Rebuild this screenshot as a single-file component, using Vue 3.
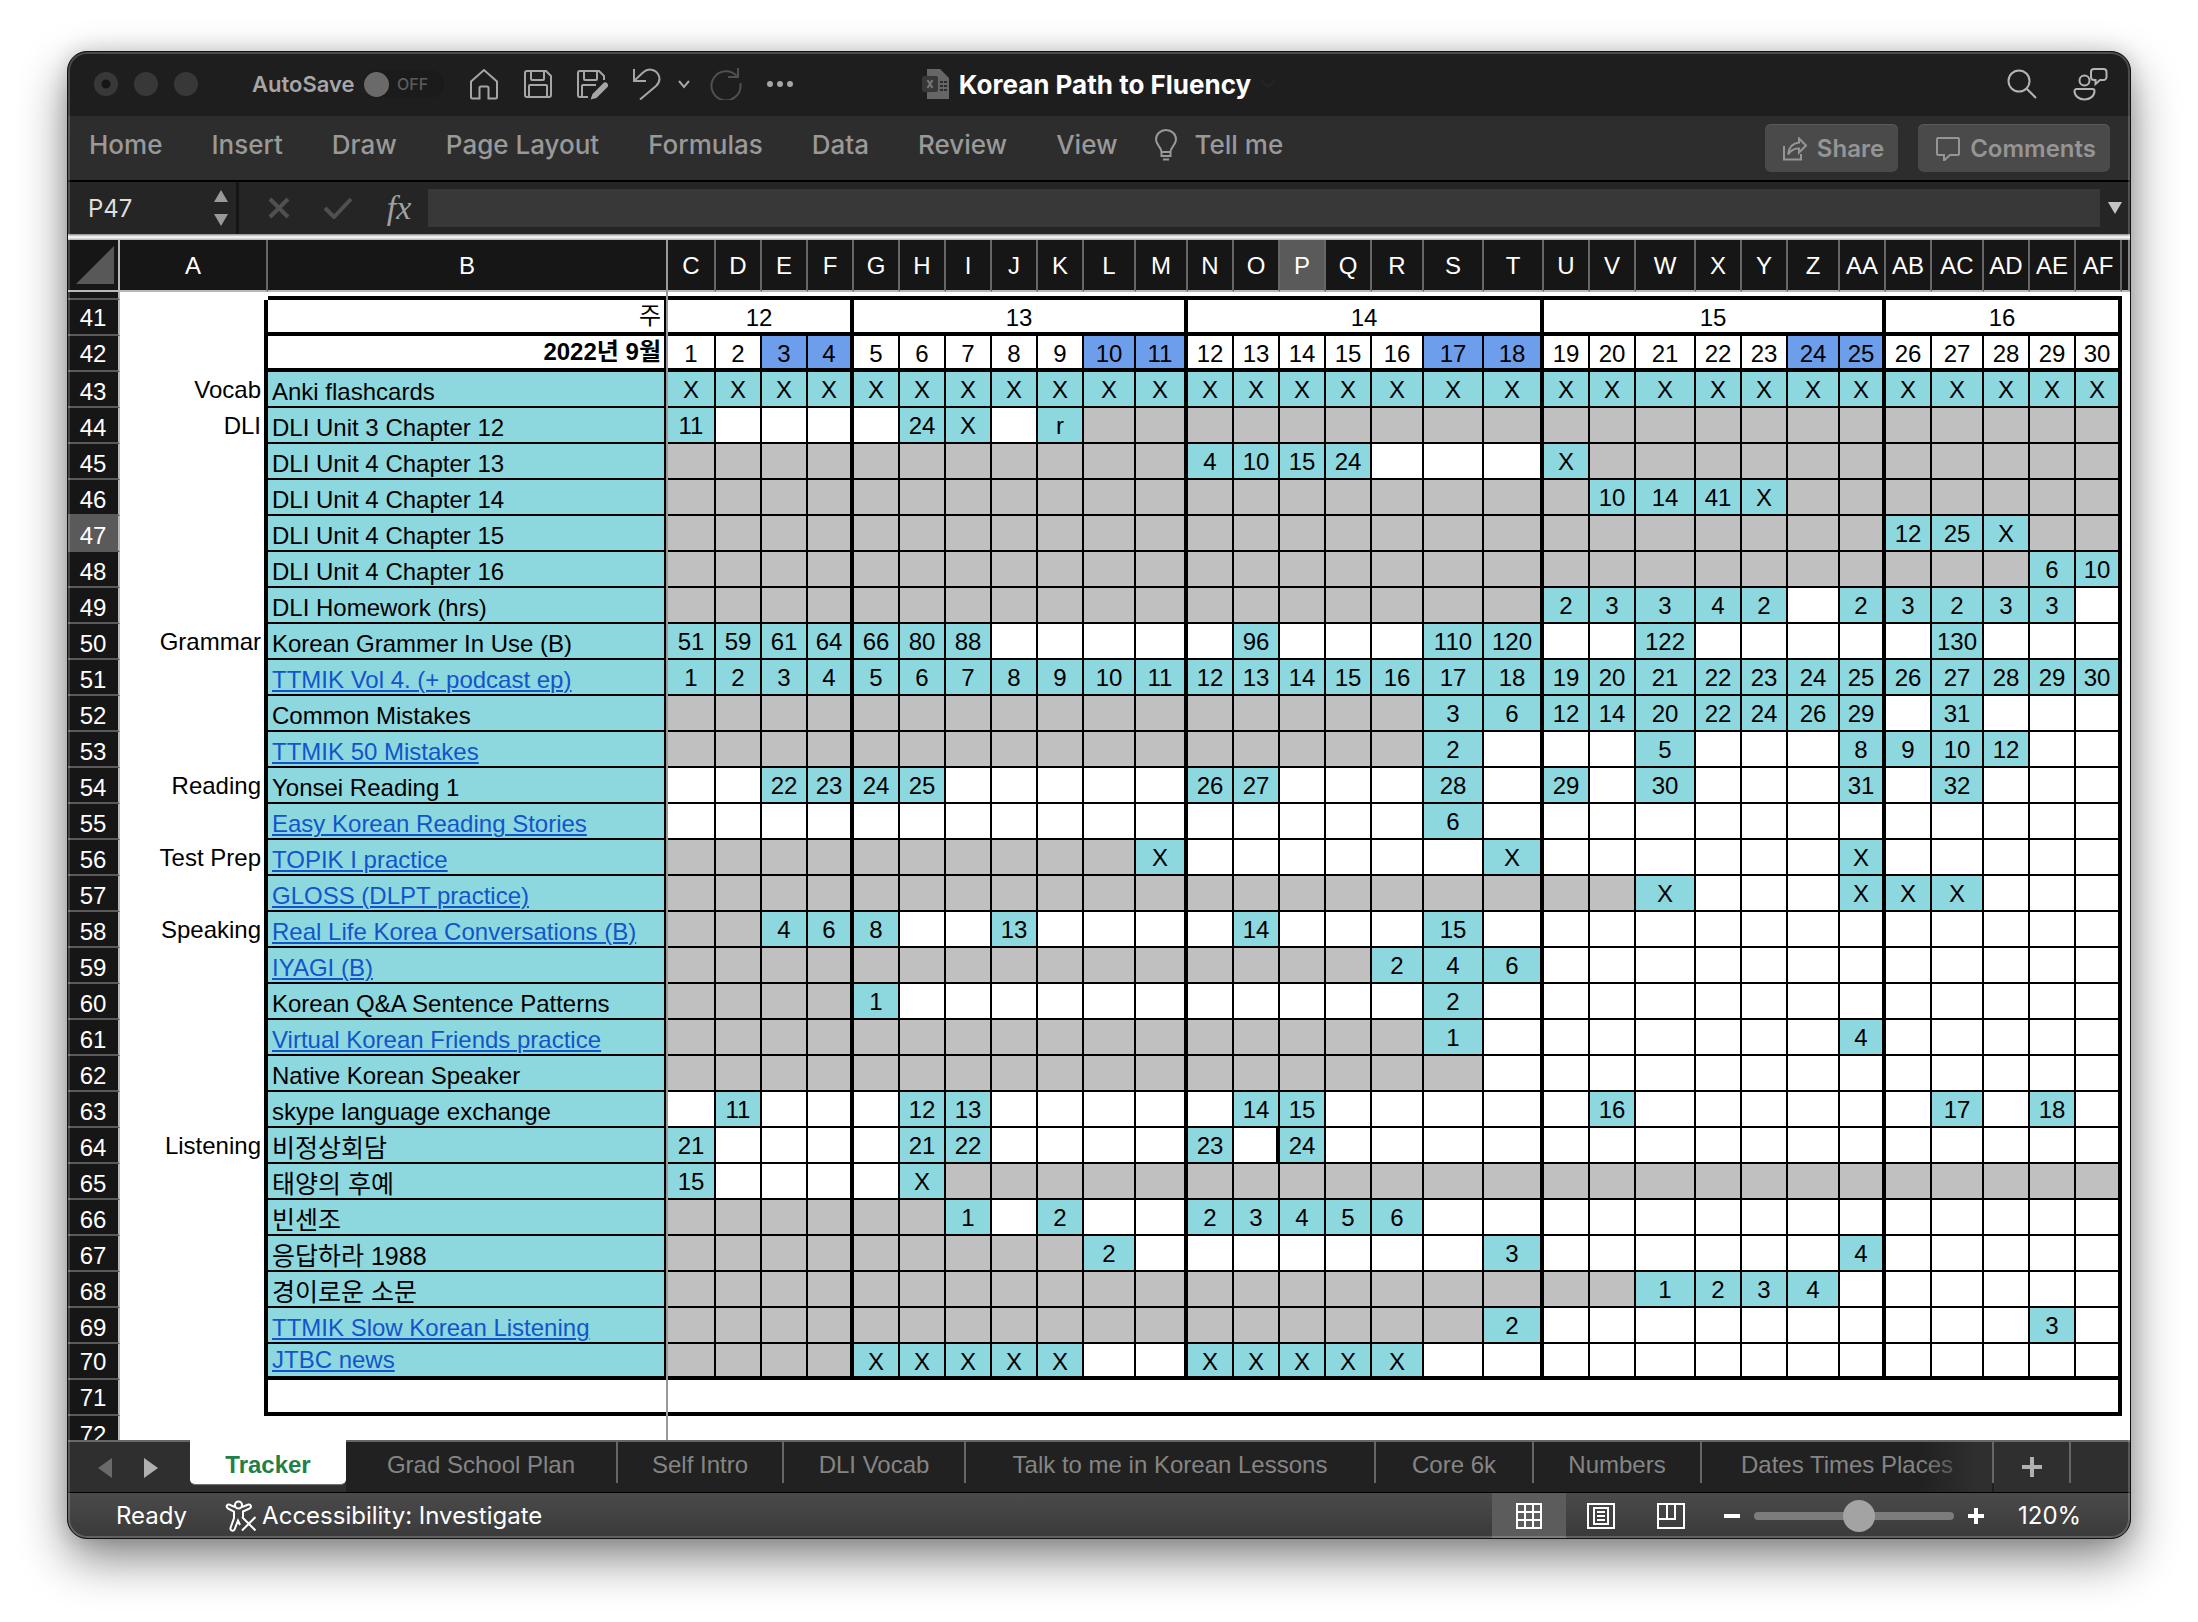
<script setup>
import { ref } from 'vue'

const weekEnds = ['F', 'M', 'T', 'AA', 'AF']
const weekends = [3, 4, 10, 11, 17, 18, 24, 25]

const columnWidths = {
  C: 48, D: 46, E: 46, F: 46, G: 46, H: 46, I: 46, J: 46, K: 46, L: 52, M: 52,
  N: 46, O: 46, P: 46, Q: 46, R: 52, S: 60, T: 60, U: 46, V: 46, W: 60, X: 46,
  Y: 46, Z: 52, AA: 46, AB: 46, AC: 52, AD: 46, AE: 46, AF: 46,
}
const days = Object.keys(columnWidths)

const weeks = [
  { label: 12, span: 4 },
  { label: 13, span: 7 },
  { label: 14, span: 7 },
  { label: 15, span: 7 },
  { label: 16, span: 5 },
]

// Each entry: "#n" is n closed cells, "_n" is n open cells, anything else is a logged value.
const tasks = [
  [43, 'Vocab', 'Anki flashcards', 'X X X X X X X X X X X X X X X X X X X X X X X X X X X X X X'],
  [44, 'DLI', 'DLI Unit 3 Chapter 12', '11 _4 24 X _1 r #21'],
  [45, '', 'DLI Unit 4 Chapter 13', '#11 4 10 15 24 _3 X #11'],
  [46, '', 'DLI Unit 4 Chapter 14', '#19 10 14 41 X #7'],
  [47, '', 'DLI Unit 4 Chapter 15', '#25 12 25 X #2'],
  [48, '', 'DLI Unit 4 Chapter 16', '#28 6 10'],
  [49, '', 'DLI Homework (hrs)', '#18 2 3 3 4 2 _1 2 3 2 3 3 _1'],
  [50, 'Grammar', 'Korean Grammer In Use (B)', '51 59 61 64 66 80 88 _5 96 _3 110 120 _2 122 _5 130 _3'],
  [51, '', 'TTMIK Vol 4. (+ podcast ep)', days.map((_, i) => i + 1).join(' '), true],
  [52, '', 'Common Mistakes', '#16 3 6 12 14 20 22 24 26 29 _1 31 _3'],
  [53, '', 'TTMIK 50 Mistakes', '#16 2 _3 5 _3 8 9 10 12 _2', true],
  [54, 'Reading', 'Yonsei Reading 1', '_2 22 23 24 25 _5 26 27 _3 28 _1 29 _1 30 _3 31 _1 32 _3'],
  [55, '', 'Easy Korean Reading Stories', '_16 6 _13', true],
  [56, 'Test Prep', 'TOPIK I practice', '#10 X _6 X _6 X _5', true],
  [57, '', 'GLOSS (DLPT practice)', '#20 X _3 X X X _3', true],
  [58, 'Speaking', 'Real Life Korea Conversations (B)', '#2 4 6 8 _2 13 _4 14 _3 15 _13', true],
  [59, '', 'IYAGI (B)', '#15 2 4 6 _12', true],
  [60, '', 'Korean Q&A Sentence Patterns', '#4 1 _11 2 _13'],
  [61, '', 'Virtual Korean Friends practice', '#16 1 _7 4 _5', true],
  [62, '', 'Native Korean Speaker', '#17 _13'],
  [63, '', 'skype language exchange', '_1 11 _3 12 13 _5 14 15 _5 16 _6 17 _1 18 _1'],
  [64, 'Listening', '비정상회담', '21 _4 21 22 _4 23 _1 24 _16'],
  [65, '', '태양의 후예', '15 _4 X #24'],
  [66, '', '빈센조', '#6 1 _1 2 _2 2 3 4 5 6 _14'],
  [67, '', '응답하라 1988', '#9 2 _7 3 _6 4 _5'],
  [68, '', '경이로운 소문', '#20 1 2 3 4 _6'],
  [69, '', 'TTMIK Slow Korean Listening', '#17 2 _10 3 _1', true],
  [70, '', 'JTBC news', '#4 X X X X X _2 X X X X X _14', true],
].map(([number, group, name, log, link]) => ({
  number,
  group,
  name,
  link,
  hangul: /[가-힣]/.test(name),
  cells: parseLog(number, log),
}))

function parseLog(row, log) {
  const cells = log.split(' ').flatMap((token) => {
    if (token[0] === '#') return Array.from({ length: +token.slice(1) }, () => ({ text: '', kind: 'closed' }))
    if (token[0] === '_') return Array.from({ length: +token.slice(1) }, () => ({ text: '', kind: 'open' }))
    return [{ text: token, kind: 'done' }]
  })
  return cells.map((cell, i) => ({
    ...cell,
    thick: weekEnds.includes(days[i]) || (row === 64 && days[i] === 'O'),
  }))
}

const ribbonTabs = ['Home', 'Insert', 'Draw', 'Page Layout', 'Formulas', 'Data', 'Review', 'View']

const sheets = [
  { name: 'Tracker', width: 156 },
  { name: 'Grad School Plan', width: 272 },
  { name: 'Self Intro', width: 166 },
  { name: 'DLI Vocab', width: 182 },
  { name: 'Talk to me in Korean Lessons', width: 410 },
  { name: 'Core 6k', width: 158 },
  { name: 'Numbers', width: 168 },
  { name: 'Dates Times Places', width: 292 },
]
const activeSheet = ref('Tracker')
const zoom = ref(53)
const cellRef = ref('P47')
const formula = ref('')
</script>

<template>
  <div class="desktop">
    <main class="window">
      <header class="titlebar">
        <div class="title-left">
          <div class="lights">
            <button class="light dot" aria-label="Close"></button>
            <button class="light" aria-label="Minimize"></button>
            <button class="light" aria-label="Zoom"></button>
          </div>
          <span class="autosave">AutoSave</span>
          <button class="toggle" role="switch" aria-checked="false" aria-label="AutoSave"><i></i>OFF</button>
          <div class="quick">
            <button aria-label="Home">
              <svg width="32" height="32" viewBox="0 0 32 32"><path d="M3 13.5 L16 2 L29 13.5 V29 a1.5 1.5 0 0 1-1.5 1.5 H20.5 V20 a1.5 1.5 0 0 0-1.5-1.5 H13 a1.5 1.5 0 0 0-1.5 1.5 V30.5 H4.500 A1.5 1.5 0 0 1 3 29 Z" /></svg>
            </button>
            <button aria-label="Save">
              <svg width="32" height="32" viewBox="0 0 32 32"><path d="M5 3 H24 L29 8 V27 a2 2 0 0 1-2 2 H5 a2 2 0 0 1-2-2 V5 a2 2 0 0 1 2-2 Z M9 3 V11 a1 1 0 0 0 1 1 H21 a1 1 0 0 0 1-1 V3 M7 29 V18 a1 1 0 0 1 1-1 H24 a1 1 0 0 1 1 1 V29" /></svg>
            </button>
            <button aria-label="Save as">
              <svg width="32" height="32" viewBox="0 0 32 32"><path d="M12 29 H4 a2 2 0 0 1-2-2 V5 a2 2 0 0 1 2-2 H23 L28 8 V12 M8 3 V11 a1 1 0 0 0 1 1 H20 a1 1 0 0 0 1-1 V3 M6 29 V18 a1 1 0 0 1 1-1 H20" /><path class="solid" d="M28 14.500 a3 3 0 0 1 3.500 4.500 L20.500 30 L14.500 31.500 L16.500 26 Z" /></svg>
            </button>
            <button aria-label="Undo">
              <svg width="32" height="32" viewBox="0 0 32 32"><path d="M4 1 V13 H16 M4 13 L13 4.500 C18 0 25 1 28 6 C31 11 29 15 26 18 L10 31.500" /></svg>
            </button>
            <button class="more" aria-label="Undo history">
              <svg width="12" height="12" viewBox="0 0 12 12"><path d="M1 3 L6 9 L11 3" /></svg>
            </button>
            <button class="dim" aria-label="Redo">
              <svg width="32" height="32" viewBox="0 0 32 32"><path d="M28 0 V9 H18 M27.200 8.600 A14.500 14.500 0 1 0 30.500 17 V15" /></svg>
            </button>
            <button aria-label="More commands">
              <svg width="32" height="32" viewBox="0 0 32 32" class="dots"><circle cx="6" cy="16" r="3" /><circle cx="16" cy="16" r="3" /><circle cx="26" cy="16" r="3" /></svg>
            </button>
          </div>
        </div>
        <h1 class="doc">
          <svg width="28" height="32" viewBox="0 0 28 32" aria-hidden="true">
            <path d="M5 1 H18 L27 10 V31 H5 Z" fill="#666" />
            <path d="M18 13 h3 v2 h-3z M22 13 h3 v2 h-3z M18 17 h3 v2 h-3z M22 17 h3 v2 h-3z M18 21 h3 v2 h-3z M22 21 h3 v2 h-3z" fill="#2c2c2c" />
            <rect x="0" y="8" width="16" height="16" rx="2" fill="#383838" />
            <path d="M5.500 12 L10.500 20 M10.500 12 L5.500 20" stroke="#777" stroke-width="2" />
          </svg>
          Korean Path to Fluency
          <svg width="16" height="10" viewBox="0 0 16 10" aria-hidden="true"><path d="M1 1 L8 8 L15 1" fill="none" stroke="#262626" stroke-width="2" /></svg>
        </h1>
        <div class="title-right">
          <button aria-label="Search">
            <svg width="32" height="32" viewBox="0 0 32 32"><circle cx="13" cy="13" r="10.500" /><path d="M20.500 20.500 L30 30" /></svg>
          </button>
          <button aria-label="Account">
            <svg width="36" height="36" viewBox="0 0 36 36"><circle cx="12.500" cy="14.500" r="5" /><path d="M4.500 23 H20.500 a2 2 0 0 1 2 2 C22.500 30 18 33.500 12.500 33.500 S2.500 30 2.500 25 a2 2 0 0 1 2-2 Z M21 3 H31.500 a3 3 0 0 1 3 3 V11 a3 3 0 0 1-3 3 H28 L23.500 18 V14 H22 a3 3 0 0 1-3-3 V6 a3 3 0 0 1 3-3" /></svg>
          </button>
        </div>
      </header>

      <nav class="ribbon">
        <button v-for="tab in ribbonTabs" :key="tab">{{ tab }}</button>
        <button class="tell">
          <svg width="22" height="32" viewBox="0 0 22 32"><path d="M6.500 23 C6.500 18 1 16 1 10.500 A10 9.500 0 0 1 21 10.500 C21 16 15.500 18 15.500 23 Z M6.500 23 V27 H15.500 V23 M8 30.500 H14" /></svg>
          Tell me
        </button>
        <div class="ribbon-actions">
          <button class="action">
            <svg width="24" height="24" viewBox="0 0 24 24"><path d="M1 9 V22.500 H18 V17 M16 1.500 L23 8.500 L16 15.500 V11.500 C11 11 8 13 5 17.500 C6 10 10 6 16 5.500 Z" /></svg>
            Share
          </button>
          <button class="action comments">
            <svg width="24" height="24" viewBox="0 0 24 24"><path d="M2 1 H22 a1 1 0 0 1 1 1 V17 a1 1 0 0 1-1 1 H14 L8 23.500 V18 H2 a1 1 0 0 1-1-1 V2 a1 1 0 0 1 1-1 Z" /></svg>
            Comments
          </button>
        </div>
      </nav>

      <section class="formula-bar">
        <div class="name-box">
          <input v-model="cellRef" aria-label="Name box" />
          <svg width="14" height="36" viewBox="0 0 14 36" aria-hidden="true"><path d="M7 0 L14 12 H0 Z M0 24 H14 L7 36 Z" /></svg>
        </div>
        <button class="cancel" aria-label="Cancel">
          <svg width="22" height="22" viewBox="0 0 22 22"><path d="M2 2 L20 20 M20 2 L2 20" /></svg>
        </button>
        <button class="confirm" aria-label="Enter">
          <svg width="30" height="22" viewBox="0 0 30 22"><path d="M2 11 L11 20 L28 2" /></svg>
        </button>
        <button class="fx" aria-label="Insert function">fx</button>
        <input v-model="formula" class="formula" aria-label="Formula" />
        <button class="expand" aria-label="Expand formula bar">
          <svg width="14" height="12" viewBox="0 0 14 12"><path d="M0 0 H14 L7 12 Z" /></svg>
        </button>
      </section>

      <section class="sheet">
        <table>
          <colgroup>
            <col class="col-index" />
            <col class="col-a" />
            <col class="col-b" />
            <col v-for="day in days" :key="day" :style="{ width: columnWidths[day] + 'px' }" />
            <col />
          </colgroup>
          <thead>
            <tr>
              <th class="corner"><svg width="38" height="38" viewBox="0 0 38 38" aria-hidden="true"><path d="M38 0 V38 H0 Z" /></svg></th>
              <th>A</th>
              <th>B</th>
              <th v-for="day in days" :key="day" :class="{ picked: day === 'P' }">{{ day }}</th>
              <th></th>
            </tr>
          </thead>
          <tbody>
            <tr class="sliver">
              <th></th>
              <td></td>
              <td class="ruled" colspan="31"></td>
              <td></td>
            </tr>
            <tr class="heavy weeks">
              <th>41</th>
              <td class="group"></td>
              <td class="name right">주</td>
              <td v-for="week in weeks" :key="week.label" class="thick" :colspan="week.span">{{ week.label }}</td>
              <td class="rest"></td>
            </tr>
            <tr class="heavy dates">
              <th>42</th>
              <td class="group"></td>
              <td class="name right bold">2022년 9월</td>
              <td
                v-for="(day, i) in days"
                :key="day"
                :class="{ thick: weekEnds.includes(day), weekend: weekends.includes(i + 1) }"
              >{{ i + 1 }}</td>
              <td class="rest"></td>
            </tr>
            <tr v-for="task in tasks" :key="task.number" :class="{ heavy: task.number === 70 }">
              <th :class="{ picked: task.number === 47 }">{{ task.number }}</th>
              <td class="group">{{ task.group }}</td>
              <td class="name done" :class="{ hangul: task.hangul }">
                <a v-if="task.link" href="#">{{ task.name }}</a>
                <template v-else>{{ task.name }}</template>
              </td>
              <td v-for="(cell, i) in task.cells" :key="i" :class="[cell.kind, { thick: cell.thick }]">{{ cell.text }}</td>
              <td class="rest"></td>
            </tr>
            <tr class="heavy">
              <th>71</th>
              <td class="group"></td>
              <td class="thick" colspan="31"></td>
              <td class="rest"></td>
            </tr>
            <tr class="cut">
              <th><div>72</div></th>
              <td colspan="33"></td>
            </tr>
          </tbody>
        </table>
        <div class="freeze"></div>
      </section>

      <nav class="sheet-tabs">
        <div class="arrows">
          <button aria-label="Previous sheet"><svg width="14" height="20" viewBox="0 0 14 20"><path d="M14 0 V20 L0 10 Z" /></svg></button>
          <button class="next" aria-label="Next sheet"><svg width="14" height="20" viewBox="0 0 14 20"><path d="M0 0 V20 L14 10 Z" /></svg></button>
        </div>
        <div class="tabs" role="tablist">
          <button
            v-for="sheet in sheets"
            :key="sheet.name"
            role="tab"
            :aria-selected="sheet.name === activeSheet"
            :class="{ active: sheet.name === activeSheet }"
            :style="{ width: sheet.width + 'px' }"
            @click="activeSheet = sheet.name"
          ><span>{{ sheet.name }}</span></button>
        </div>
        <button class="add" aria-label="Add sheet"><svg width="20" height="20" viewBox="0 0 20 20"><path d="M10 0 V20 M0 10 H20" /></svg></button>
      </nav>

      <footer class="status">
        <span class="ready">Ready</span>
        <button class="a11y">
          <svg width="32" height="32" viewBox="0 0 32 32" aria-hidden="true"><path d="M17 5 a3.500 3.500 0 1 1-7 0 a3.500 3.500 0 0 1 7 0 M10 7 L4 4.500 C2 4 0.500 7 3 8.500 L9 11.500 V18 L5.500 28 C5 31 8.500 31.500 9.500 29.500 L13 20.500 L15 25 M17 7 L23.500 4.500 C26 4 27 7.500 24.500 8.500 L18 11.500 V17 M17 17 L30.500 30.500 M30.500 17 L17 30.500" /></svg>
          Accessibility: Investigate
        </button>
        <div class="views">
          <button class="on" aria-label="Normal view"><svg width="28" height="28" viewBox="0 0 28 28"><path d="M2 2 H26 V26 H2 Z M10 2 V26 M18 2 V26 M2 10 H26 M2 18 H26" /></svg></button>
          <button aria-label="Page layout view"><svg width="30" height="28" viewBox="0 0 30 28"><path d="M2 2 H28 V26 H2 Z M8 6 H22 V22 H8 Z M11 10 H19 M11 14 H19 M11 18 H19" /></svg></button>
          <button aria-label="Page break view"><svg width="30" height="28" viewBox="0 0 30 28"><path d="M2 2 H28 V26 H2 Z M2 17 H19 V2 M11 2 V17" /></svg></button>
        </div>
        <div class="zoom">
          <button aria-label="Zoom out"><svg width="16" height="16" viewBox="0 0 16 16"><path d="M0 8 H16" /></svg></button>
          <input v-model="zoom" type="range" min="0" max="100" aria-label="Zoom level" />
          <button aria-label="Zoom in"><svg width="16" height="16" viewBox="0 0 16 16"><path d="M0 8 H16 M8 0 V16" /></svg></button>
          <output>120%</output>
        </div>
      </footer>
    </main>
  </div>
</template>

<style>
body {
  margin: 0;
  background: #fff;
}
</style>

<style scoped>
* {
  box-sizing: border-box;
}
.desktop {
  padding: 51px 67px 83px;
  overflow: hidden;
  font-family: Inter, "Noto Sans CJK KR", sans-serif;
  font-size: 24px;
}
button {
  margin: 0;
  padding: 0;
  border: 0;
  background: none;
  color: inherit;
  font: inherit;
}
svg {
  display: block;
  flex: none;
  fill: none;
  stroke: currentColor;
  stroke-width: 2;
}
.window {
  position: relative;
  overflow: hidden;
  border: 1px solid #111;
  border-radius: 20px;
  background: #1e1e1e;
  box-shadow: 0 20px 48px rgba(0, 0, 0, 0.48), 0 0 20px rgba(0, 0, 0, 0.14);
}
.window::after {
  content: "";
  position: absolute;
  inset: 0;
  border-radius: 19px;
  box-shadow: inset 0 0 0 2px rgba(255, 255, 255, 0.2);
  pointer-events: none;
}

/* Title bar */
.titlebar {
  display: grid;
  grid-template-columns: 1fr auto 1fr;
  align-items: center;
  height: 64px;
}
.title-left,
.lights,
.quick,
.title-right {
  display: flex;
  align-items: center;
}
.title-left {
  padding-left: 26px;
  color: #a6a6a6;
}
.lights {
  gap: 16px;
}
.light {
  width: 24px;
  height: 24px;
  border-radius: 50%;
  background: #383838;
}
.light.dot {
  background: radial-gradient(circle, #161616 4px, #383838 5px);
}
.autosave {
  width: 112px;
  margin-left: 54px;
  font-size: 22px;
  font-weight: 600;
}
.toggle {
  display: flex;
  align-items: center;
  gap: 8px;
  width: 80px;
  height: 28px;
  border-radius: 14px;
  background: #1b1b1b;
  color: #5c5c5c;
  font-size: 16px;
  font-weight: 500;
}
.toggle i {
  width: 25px;
  height: 25px;
  border-radius: 50%;
  background: #6a6a6a;
}
.quick {
  gap: 22px;
  margin-left: 24px;
}
.quick .more {
  margin: 0 -2px 0 -6px;
}
.quick .dim {
  color: #505050;
}
.quick .solid,
.dots {
  fill: currentColor;
  stroke: none;
}
.doc {
  display: flex;
  align-items: center;
  gap: 9px;
  margin: 0;
  color: #fff;
  font-size: 26px;
  font-weight: 700;
}
.doc svg {
  stroke: none;
}
.title-right {
  justify-content: flex-end;
  gap: 34px;
  padding-right: 22px;
  color: #b4b4b4;
}

/* Ribbon */
.ribbon {
  display: flex;
  gap: 49px;
  height: 66px;
  padding: 0 20px 0 21px;
  border-bottom: 2px solid #000;
  background: #2d2d2d;
  color: #999;
  font-size: 26px;
  font-weight: 500;
  line-height: 58px;
}
.ribbon > button {
  height: 58px;
}
.ribbon .tell {
  display: flex;
  align-items: center;
  gap: 18px;
  margin-left: -12px;
}
.ribbon-actions {
  display: flex;
  gap: 20px;
  margin: 8px 0 0 auto;
  font-size: 24px;
}
.action {
  display: flex;
  align-items: center;
  gap: 10px;
  height: 48px;
  padding: 2px 14px 0 18px;
  border-radius: 6px;
  background: #4a4a4a;
  box-shadow: inset 0 1px #5a5a5a;
  color: #959595;
  font-weight: 600;
  line-height: 46px;
}

/* Formula bar */
.formula-bar {
  display: flex;
  align-items: center;
  height: 58px;
  padding-bottom: 6px;
  background: linear-gradient(#8c8c8c, #fff 50%, #b0b0b0) bottom / 100% 6px no-repeat, #252525;
  color: #505050;
}
.name-box {
  display: flex;
  align-items: center;
  justify-content: space-between;
  width: 171px;
  height: 52px;
  padding: 0 8px 0 20px;
  border-right: 3px solid #161616;
}
.name-box input {
  width: 100px;
  padding: 0;
  border: 0;
  background: none;
  color: #dedede;
  font: inherit;
}
.name-box svg,
.expand svg {
  fill: #999;
  stroke: none;
}
.cancel {
  margin-left: 29px;
}
.confirm {
  margin-left: 33px;
}
.cancel svg,
.confirm svg {
  stroke-width: 4;
}
.fx {
  width: 40px;
  margin-left: 26px;
  color: #a0a0a0;
  font: italic 34px/48px "Liberation Serif", serif;
}
.formula {
  flex: 1;
  min-width: 0;
  height: 38px;
  margin-left: 9px;
  padding: 0 8px;
  border: 0;
  background: #383838;
  color: #fff;
  font: inherit;
}
.expand {
  padding: 0 8px;
}
.expand svg {
  fill: #c4c4c4;
}

/* Grid */
.sheet {
  position: relative;
  overflow: hidden;
  background: #fff;
}
table {
  width: 100%;
  border-collapse: separate;
  border-spacing: 0;
  table-layout: fixed;
  font-family: "Liberation Sans", "Noto Sans CJK KR", sans-serif;
  font-size: 24px;
  line-height: 28px;
  color: #000;
}
.col-index {
  width: 52px;
}
.col-a {
  width: 148px;
}
.col-b {
  width: 400px;
}
th,
td {
  overflow: hidden;
  padding: 0;
  text-align: center;
  vertical-align: top;
  white-space: nowrap;
}
th {
  border-right: 2px solid #b8b8b8;
  border-bottom: 2px solid #5a5a5a;
  background: #161616;
  color: #fff;
  font-weight: 400;
}
thead th {
  height: 52px;
  padding-top: 2px;
  border-color: #666 #666 #b8b8b8;
  line-height: 48px;
}
thead .corner {
  padding: 6px 0 0 8px;
  border-right-color: #b8b8b8;
}
.corner svg {
  fill: #585858;
  stroke: none;
}
th.picked {
  background: #5a5a5a;
}
tbody tr {
  height: 36px;
}
tbody th {
  padding-top: 6px;
}
tbody td {
  padding-top: 4px;
  border-right: 2px solid #000;
  border-bottom: 2px solid #000;
}
tbody .thick {
  border-right-width: 4px;
}
tbody .group {
  padding-right: 3px;
  border-right-width: 4px;
  border-bottom: 0;
  text-align: right;
}
tbody .name {
  padding: 6px 2px 0 4px;
  border-right-color: #999;
  box-shadow: inset -2px 0 #000;
  text-align: left;
}
.hangul {
  font-size: 25px;
}
.heavy td {
  border-bottom-width: 4px;
}
.heavy .name {
  padding-top: 2px;
}
.heavy th {
  padding-top: 4px;
}
tbody .name.right {
  padding-right: 5px;
  text-align: right;
}
.bold {
  font-weight: 700;
}
tbody .rest {
  border: 0;
}
.done {
  background: #8dd7de;
}
.closed {
  background: #c0c0c0;
}
.weekend {
  background: #6d9eeb;
}
a {
  color: #1155cc;
  text-decoration-thickness: 2px;
  text-underline-offset: 2px;
}
.sliver,
.sliver th,
.sliver td {
  height: 8px;
  padding: 0;
  line-height: 0;
}
.sliver td {
  border: 0;
}
.sliver .ruled {
  border-bottom: 4px solid #000;
}
.cut,
.cut th {
  height: 24px;
}
.cut th {
  padding: 0;
  border-bottom: 0;
}
.cut div {
  height: 24px;
  padding-top: 5px;
  overflow: hidden;
}
.cut td {
  border: 0;
}
.freeze {
  position: absolute;
  top: 0;
  bottom: 0;
  left: 598px;
  width: 2px;
  background: #999;
}

/* Sheet tabs */
.sheet-tabs {
  display: flex;
  height: 52px;
  border-top: 2px solid #666;
  background: #2f2f2f;
  color: #858585;
  font-family: "Liberation Sans", sans-serif;
}
.arrows {
  display: flex;
  align-items: center;
  gap: 32px;
  width: 122px;
  padding: 2px 0 0 30px;
  color: #6a6a6a;
}
.arrows svg {
  fill: currentColor;
  stroke: none;
}
.arrows .next {
  color: #b0b0b0;
}
.tabs {
  position: relative;
  display: flex;
  min-width: 0;
  margin-top: -2px;
  padding-top: 2px;
  overflow: hidden;
}
.tabs::after {
  content: "";
  position: absolute;
  top: 2px;
  right: 2px;
  width: 72px;
  height: 50px;
  background: linear-gradient(90deg, transparent, #2f2f2f 80%);
}
.tabs button {
  display: flex;
  flex: none;
  align-items: flex-start;
  height: 50px;
  background: #212121;
}
.tabs span {
  flex: 1;
  height: 41px;
  border-right: 2px solid #666;
  line-height: 46px;
}
.tabs .active {
  background: #2f2f2f;
}
.tabs .active span {
  height: 44px;
  margin-top: -2px;
  padding-top: 2px;
  border-right: 0;
  border-radius: 0 0 5px 5px;
  background: #fff;
  box-shadow: 0 1px 1px #777;
  color: #1f8048;
  font-weight: 700;
}
.add {
  display: flex;
  align-items: center;
  justify-content: center;
  width: 77px;
  height: 41px;
  padding-top: 8px;
  border-right: 2px solid #666;
  color: #b0b0b0;
}
.add svg {
  stroke-width: 4;
}

/* Status bar */
.status {
  display: flex;
  align-items: center;
  height: 46px;
  border-top: 1px solid #000;
  background: linear-gradient(#4a4a4a, #3a3a3a);
  color: #fff;
}
.ready {
  margin-left: 48px;
}
.a11y {
  display: flex;
  align-items: center;
  gap: 5px;
  margin-left: 38px;
}
.views {
  display: flex;
  align-self: stretch;
  margin-left: auto;
}
.views button {
  display: flex;
  align-items: center;
  justify-content: center;
  width: 70px;
}
.views .on {
  width: 74px;
  background: #5c5c5c;
}
.zoom {
  display: flex;
  align-items: center;
  gap: 14px;
  margin-left: 18px;
}
.zoom svg {
  stroke-width: 4;
}
.zoom input {
  appearance: none;
  width: 200px;
  height: 8px;
  margin: 0;
  border-radius: 4px;
  background: #7c7c7c;
}
.zoom input::-webkit-slider-thumb {
  appearance: none;
  width: 32px;
  height: 32px;
  border-radius: 50%;
  background: #a3a3a3;
}
.zoom output {
  width: 62px;
  margin: 0 50px 0 20px;
}
</style>
